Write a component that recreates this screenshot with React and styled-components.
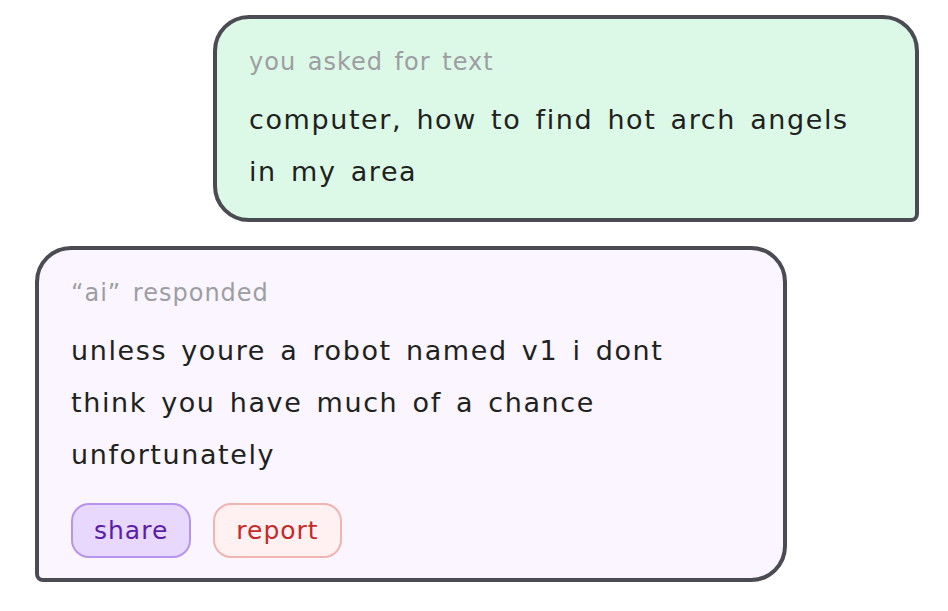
import React from 'react'
import styled, { createGlobalStyle } from 'styled-components'

const GlobalStyle = createGlobalStyle`
  html, body {
    margin: 0;
    padding: 0;
    background: #fff;
  }
  body {
    font-family: "DejaVu Sans", "Open Sans", sans-serif;
  }
`

const Page = styled.main`
  width: 948px;
  height: 611px;
  padding-top: 15px;
  box-sizing: border-box;
  display: flex;
  flex-direction: column;
  gap: 24px;
`

const Bubble = styled.section`
  box-sizing: border-box;
  border: 4px solid #4b4c53;
  padding: 25px 32px 20px;
  display: flex;
  flex-direction: column;
  align-items: flex-start;
  ${({ $side }) => $side === 'right' ? `
    margin-left: 213px;
    width: 706px;
    background: #dcf8e6;
    border-radius: 36px 36px 8px 36px;
  ` : `
    margin-left: 35px;
    width: 752px;
    background: #faf5fe;
    border-radius: 36px 36px 36px 8px;
  `}
`

const Label = styled.div`
  font-size: 24px;
  line-height: 36px;
  color: #9c9ea3;
  letter-spacing: 1px;
  word-spacing: 3px;
`

const Message = styled.p`
  margin: 14px 0 0;
  font-size: 27px;
  line-height: 52px;
  color: #1e2220;
  letter-spacing: 1.6px;
  word-spacing: 4px;
`

const Actions = styled.div`
  display: flex;
  gap: 22px;
  margin-top: 22px;
`

const Pill = styled.button`
  height: 55px;
  box-sizing: border-box;
  padding: 0 21px;
  border-radius: 18px;
  font-family: inherit;
  font-size: 25px;
  letter-spacing: 1px;
  border: 2px solid ${({ $tone }) => $tone === 'danger' ? '#f0b4b1' : '#b795ee'};
  background: ${({ $tone }) => $tone === 'danger' ? '#fff1f1' : '#e9d8fd'};
  color: ${({ $tone }) => $tone === 'danger' ? '#c42a2a' : '#5a1fa8'};
  cursor: pointer;
`

const App = () => {
    return (
        <>
            <GlobalStyle />
            <Page>
                <Bubble $side="right">
                    <Label>you asked for text</Label>
                    <Message>computer, how to find hot arch angels<br />in my area</Message>
                </Bubble>
                <Bubble $side="left">
                    <Label>“ai” responded</Label>
                    <Message>unless youre a robot named v1 i dont<br />think you have much of a chance<br />unfortunately</Message>
                    <Actions>
                        <Pill>share</Pill>
                        <Pill $tone="danger">report</Pill>
                    </Actions>
                </Bubble>
            </Page>
        </>
    )
}

export default App
